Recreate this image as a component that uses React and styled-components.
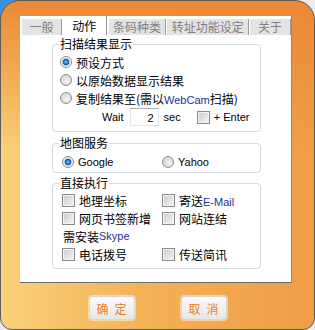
import React from "react";
import styled, { createGlobalStyle } from "styled-components";

const GlobalStyle = createGlobalStyle`
  html, body {
    margin: 0;
    padding: 0;
    overflow: hidden;
  }
  body {
    background: linear-gradient(135deg, #3d8fe0 0, #3d8fe0 14px, #ececec 14px);
    font-family: "Noto Sans CJK SC", "Liberation Sans", sans-serif;
    font-size: 12px;
    color: #000;
  }
`;

const Window = styled.div`
  width: 315px;
  height: 330px;
  box-sizing: border-box;
  border: 1px solid #5c5c5c;
  border-radius: 20px 20px 12px 12px;
  padding: 15px 0 0 19px;
  background:
    linear-gradient(to bottom, #ec8836 0%, rgba(236, 136, 54, 0) 45%),
    linear-gradient(to right, #f9d17a 0%, #f4b257 45%, #ef9c45 100%);
  display: flex;
  flex-direction: column;
`;

const Panel = styled.div`
  width: 272px;
  height: 267px;
  box-sizing: border-box;
  background: #fff;
  border-right: 1px solid #8a8a8a;
  border-bottom: 1px solid #6e6e6e;
  display: flex;
  flex-direction: column;
`;

const TabBar = styled.div`
  display: flex;
  align-items: flex-end;
  height: 19px;
  padding-left: 2px;
`;

const Tab = styled.div`
  width: ${p => p.$w}px;
  margin-right: ${p => p.$gap}px;
  height: ${p => (p.$active ? 19 : 16)}px;
  box-sizing: border-box;
  background: ${p => (p.$active ? "#fff" : "#e3e3e3")};
  color: ${p => (p.$active ? "#000" : "#808080")};
  border-right: 1px solid #9a9a9a;
  display: flex;
  align-items: center;
  justify-content: center;
  line-height: 14px;
`;

const Content = styled.div`
  padding: 2px 0 0 32px;
  display: flex;
  flex-direction: column;
`;

const Group = styled.fieldset`
  width: 209px;
  box-sizing: border-box;
  margin: ${p => p.$top || 0}px 0 0 0;
  padding: ${p => p.$pad || "2px 0 4px 7px"};
  border: 1px solid #d3dbe1;
  border-radius: 4px;
  min-inline-size: 0;
`;

const Legend = styled.legend`
  padding: 0 1px;
  margin-left: -1px;
  line-height: 14px;
  font-size: 12px;
`;

const Option = styled.div`
  display: flex;
  align-items: center;
  gap: 4px;
  height: 18px;
  white-space: nowrap;
`;

const Latin = styled.span`
  font-family: "Liberation Sans", sans-serif;
  font-size: 11px;
  color: ${p => p.$color || "#000"};
`;

const Radio = styled.span`
  flex: none;
  width: 12px;
  height: 12px;
  box-sizing: border-box;
  border-radius: 50%;
  border: 1px solid #8d8f91;
  background: ${p =>
    p.$checked
      ? "radial-gradient(circle, #7cc6ff 0, #2279d6 2px, #0f4f9e 3.2px, #dcdcdc 3.6px, #f6f6f6 5px)"
      : "radial-gradient(circle at 60% 60%, #f6f6f6 0, #dadada 5px)"};
`;

const Check = styled.span`
  flex: none;
  width: 13px;
  height: 13px;
  box-sizing: border-box;
  border: 1px solid #8a8a8a;
  box-shadow: inset 0 0 0 1px #f4f4f4;
  background: linear-gradient(135deg, #c9c9c9, #f6f6f6);
`;

const WaitRow = styled.div`
  display: flex;
  align-items: center;
  height: 20px;
  margin-left: 42px;
`;

const Field = styled.div`
  width: 29px;
  height: 18px;
  box-sizing: border-box;
  margin-left: 6px;
  border: 1px solid #e0e6ec;
  border-top-color: #abadb3;
  text-align: right;
  padding-right: 4px;
  line-height: 16px;
`;

const Columns = styled.div`
  display: grid;
  grid-template-columns: 100px 1fr;
  margin-left: 2px;
`;

const Note = styled.div`
  display: flex;
  align-items: center;
  height: 18px;
  padding-left: 1px;
  white-space: nowrap;
`;

const Buttons = styled.div`
  display: flex;
  justify-content: center;
  gap: 46px;
  margin: 13px 0 0 -19px;
`;

const Button = styled.div`
  width: 46px;
  height: 24px;
  box-sizing: border-box;
  border: 1px solid #d6d6d6;
  border-radius: 3px;
  background: linear-gradient(#fbfbfb, #e6e6e6);
  box-shadow: 0 0 0 1px rgba(255, 255, 255, 0.45);
  color: #f27a1c;
  display: flex;
  align-items: center;
  justify-content: center;
  letter-spacing: 6px;
  padding-left: 6px;
`;

const tabs = [
  { label: "一般", w: 40, gap: 1 },
  { label: "动作", w: 44, gap: 2, active: true },
  { label: "条码种类", w: 58, gap: 1 },
  { label: "转址功能设定", w: 82, gap: 1 },
  { label: "关于", w: 41, gap: 0 },
];

export default function App() {
  return (
    <>
      <GlobalStyle />
      <Window>
        <Panel>
          <TabBar>
            {tabs.map(t => (
              <Tab key={t.label} $w={t.w} $gap={t.gap} $active={t.active}>
                {t.label}
              </Tab>
            ))}
          </TabBar>
          <Content>
            <Group>
              <Legend>扫描结果显示</Legend>
              <Option>
                <Radio $checked />
                预设方式
              </Option>
              <Option>
                <Radio />
                以原始数据显示结果
              </Option>
              <Option>
                <Radio />
                <span>
                  复制结果至(需以<Latin $color="#23309a">WebCam</Latin>扫描)
                </span>
              </Option>
              <WaitRow>
                <Latin>Wait</Latin>
                <Field>
                  <Latin>2</Latin>
                </Field>
                <Latin style={{ marginLeft: 5 }}>sec</Latin>
                <Option style={{ marginLeft: 16 }}>
                  <Check />
                  <Latin>+ Enter</Latin>
                </Option>
              </WaitRow>
            </Group>

            <Group $top={4} $pad="3px 0 1px 7px">
              <Legend>地图服务</Legend>
              <Columns>
                <Option>
                  <Radio $checked />
                  <Latin>Google</Latin>
                </Option>
                <Option>
                  <Radio />
                  <Latin>Yahoo</Latin>
                </Option>
              </Columns>
            </Group>

            <Group $top={3} $pad="1px 0 5px 7px">
              <Legend>直接执行</Legend>
              <Columns>
                <Option>
                  <Check />
                  地理坐标
                </Option>
                <Option>
                  <Check />
                  <span>
                    寄送<Latin $color="#23309a">E-Mail</Latin>
                  </span>
                </Option>
                <Option>
                  <Check />
                  网页书签新增
                </Option>
                <Option>
                  <Check />
                  网站连结
                </Option>
                <Note>
                  需安装<Latin $color="#23309a">Skype</Latin>
                </Note>
                <div />
                <Option>
                  <Check />
                  电话拨号
                </Option>
                <Option>
                  <Check />
                  传送简讯
                </Option>
              </Columns>
            </Group>
          </Content>
        </Panel>
        <Buttons>
          <Button>确定</Button>
          <Button>取消</Button>
        </Buttons>
      </Window>
    </>
  );
}
